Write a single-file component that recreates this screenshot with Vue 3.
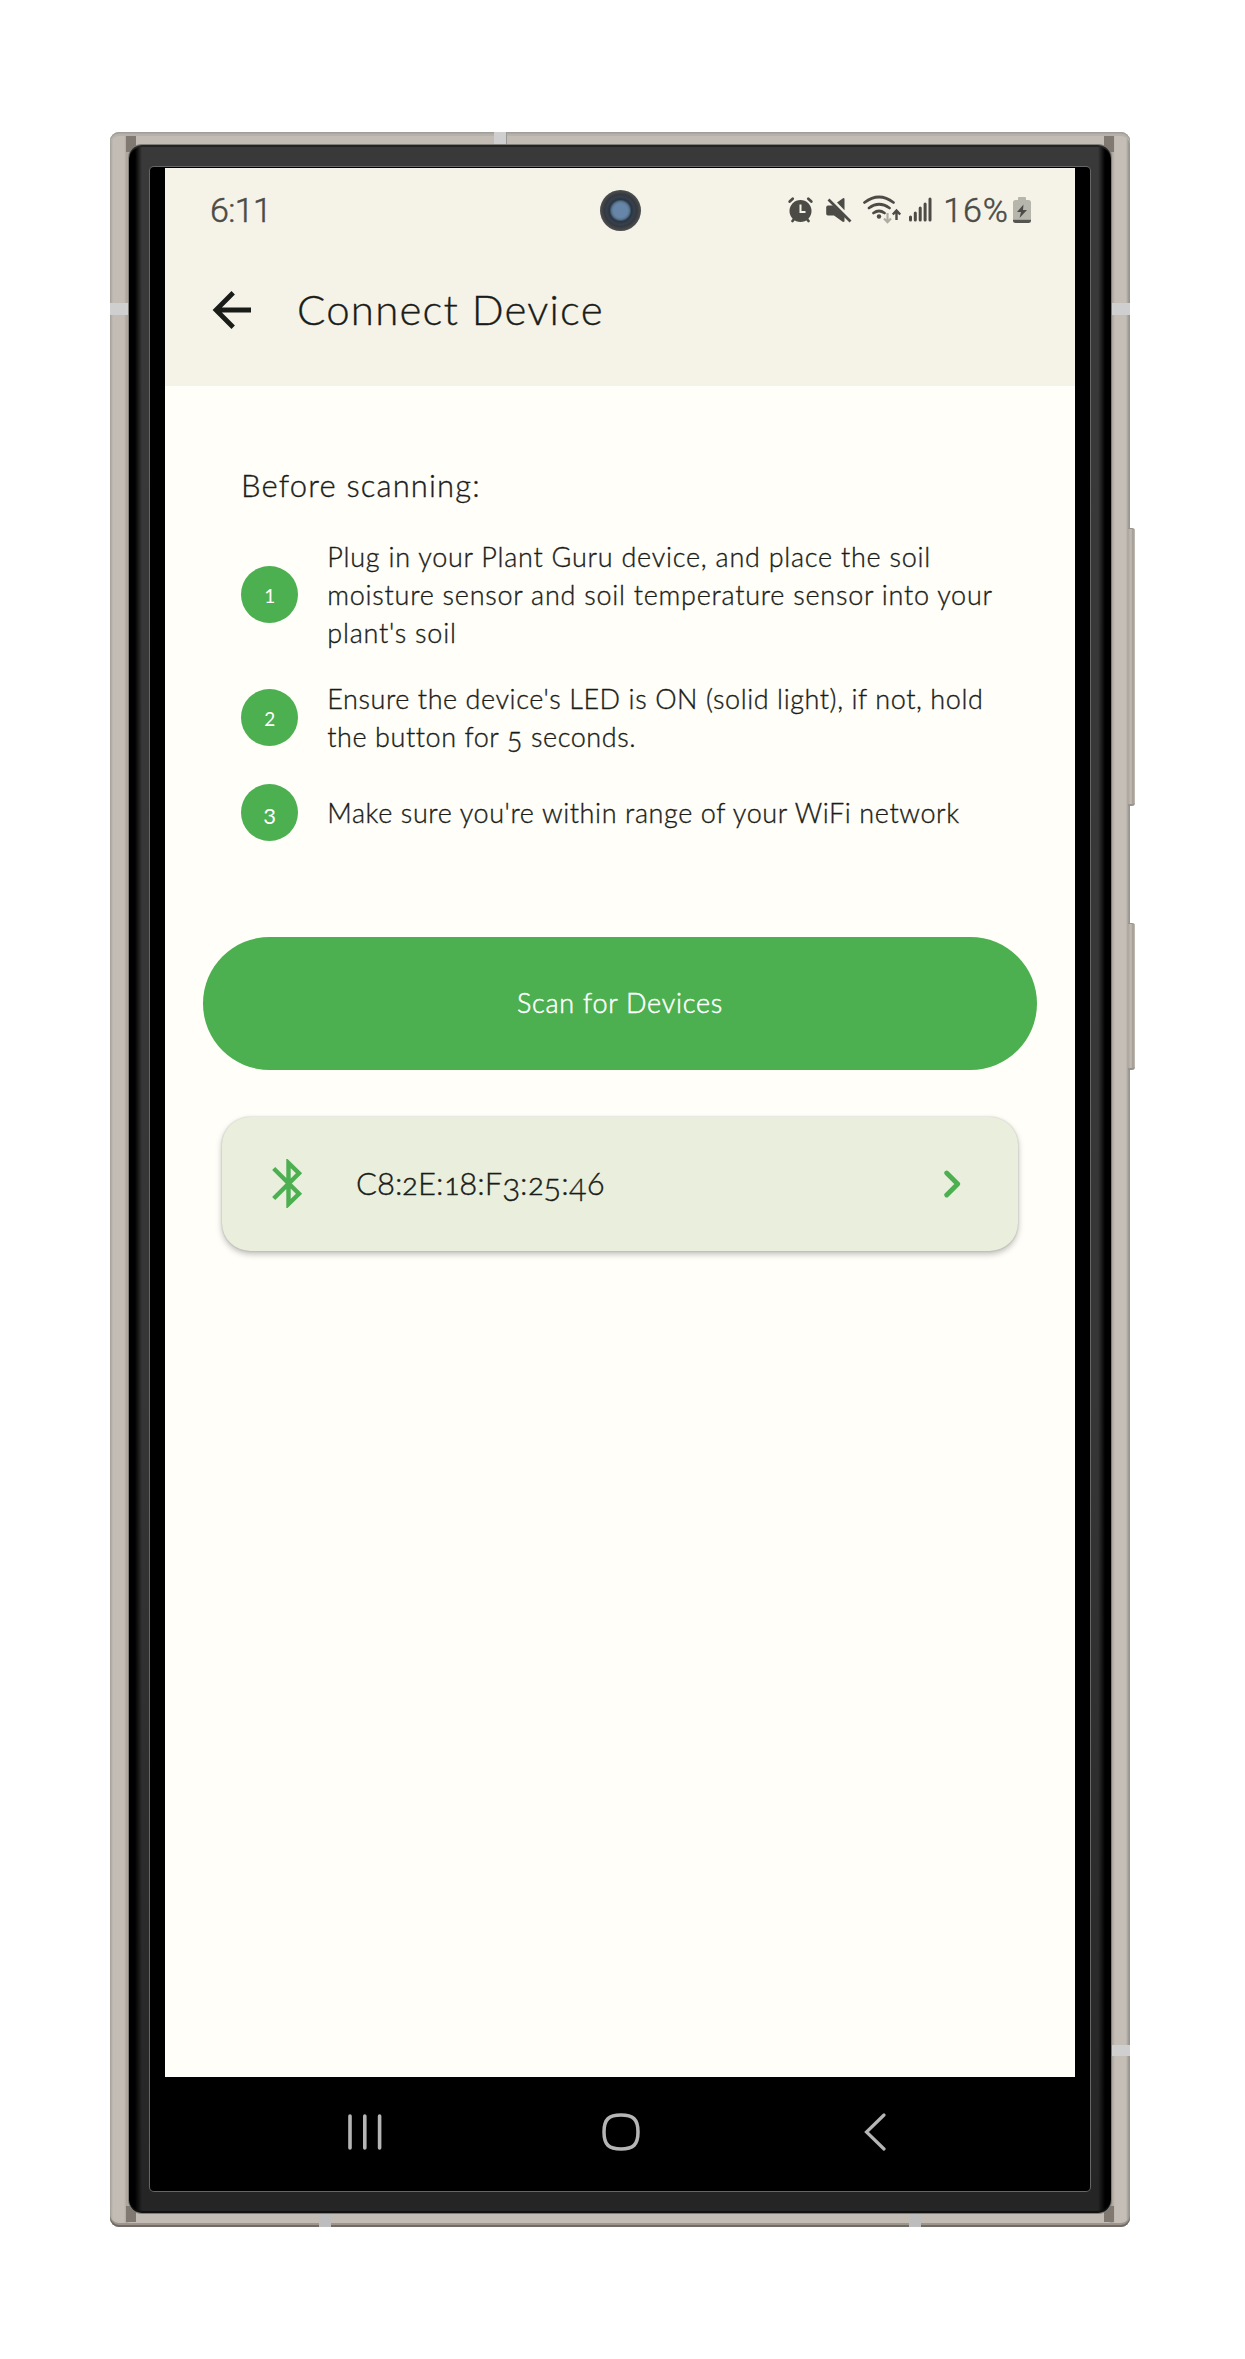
<script setup>
const steps = [
  { n: '1', low: false, lines: [
    { text: 'Plug in your Plant Guru device, and place the soil', c: 'wide' },
    { text: 'moisture sensor and soil temperature sensor into your', c: 'wide' },
    { text: "plant's soil", c: 'wide' }] },
  { n: '2', low: false, lines: [
    { text: "Ensure the device's LED is ON (solid light), if not, hold", c: 'snug' },
    { text: 'the button for 5 seconds.', c: 'snug' }] },
  { n: '3', low: true, lines: [
    { text: "Make sure you're within range of your WiFi network", c: 'medium' }] },
]
const address = 'C8:2E:18:F3:25:46'.split('')

// Old-style figures: 1 and 2 sit at x-height, 3, 4 and 5 descend below the baseline.
const figure = (ch) => ('12'.includes(ch) ? 'small' : '345'.includes(ch) ? 'low' : '')
const pieces = (text) => text.split(/(\d)/)
</script>

<template>
  <div class="page">
    <div class="phone">
      <i class="seam top"></i><i class="seam left"></i><i class="seam right"></i>
      <i class="seam right-low"></i><i class="seam bottom-a"></i><i class="seam bottom-b"></i>
      <i class="key volume"></i><i class="key power"></i>
      <i class="corner tl"></i><i class="corner tr"></i><i class="corner bl"></i><i class="corner br"></i>
      <div class="bezel">
        <div class="glass">
          <div class="screen">
            <header>
              <div class="status">
                <span class="clock">6:11</span>
                <div class="indicators">
                  <svg width="150" height="32" viewBox="0 0 150 32" fill="none" stroke="#4c4b46">
                    <g stroke-width="2.8" stroke-linecap="round">
                      <circle cx="17.500" cy="17" r="11" fill="#4c4b46" stroke="none" />
                      <path d="M6.700 7.500l3-2.700M28.300 7.500l-3-2.700M9.500 27l2-2.500M25.500 27l-2-2.500" />
                      <path d="M17.500 10.500v7.500h5" stroke="#f5f3e7" stroke-width="2" stroke-linecap="butt" />
                    </g>
                    <path d="M45 11.500h5l11.500 11V27.500l-1.500.5-9-6.500h-6q-1.800 0-1.800-1.800v-6.400q0-1.800 1.800-1.800zM54 8.500l6-4.300q1.500-.8 1.500 1v11z" fill="#4c4b46" stroke="none" />
                    <path d="M45.500 5.500l22 22" stroke-width="2.600" />
                    <path d="M81.500 8.500q14.500-11 29 0M86 14q10-7.500 20.500 0M90.500 19q5.500-4 11 0" stroke-width="2.700" stroke-linecap="round" />
                    <circle cx="96" cy="22.500" r="2.200" fill="#4c4b46" stroke="none" />
                    <path d="M104.500 19v9M101 24.500l3.500 3.700 3.500-3.700" stroke="#aeaca3" stroke-width="2.200" />
                    <path d="M113.500 26v-9M109.800 20.500l3.700-4 3.700 4" stroke-width="2.400" />
                    <path d="M127.500 26v-3M132.300 26v-7M137.200 26v-12M142.100 26v-16M147 26v-21" stroke-width="3" stroke-linecap="round" />
                  </svg>
                  <span class="percent">16%</span>
                  <svg width="18" height="27" viewBox="0 0 18 27">
                    <path d="M5 1q0-1 1-1h6q1 0 1 1v2h2.500q2.500 0 2.500 2.500V22H0V5.500Q0 3 2.500 3H5z" fill="#b7b6ac" />
                    <path d="M0 22.500h18v1.500q0 2-2.500 2h-13Q0 26 0 24z" fill="#55544f" />
                    <path d="M10.500 7.500L4 15h4l-1.500 6L14 13h-4z" fill="#4c4b46" />
                  </svg>
                </div>
              </div>
              <div class="bar">
                <svg width="40" height="40" viewBox="0 0 40 40" fill="none" stroke="#1a1c18" stroke-width="4.800"><path d="M21.200 2.800L4 20l17.200 17.200M4 20h35" /></svg>
                <h1>Connect Device</h1>
              </div>
            </header>
            <main>
              <h2>Before scanning:</h2>
              <ol>
                <li v-for="s in steps" :key="s.n">
                  <b :class="{ descending: s.low }">{{ s.n }}</b>
                  <p>
                    <span v-for="l in s.lines" :key="l.text" class="line" :class="l.c"><span v-for="(t, i) in pieces(l.text)" :key="i" :class="{ low: t === '5' }">{{ t }}</span></span>
                  </p>
                </li>
              </ol>
              <button>Scan for Devices</button>
              <section class="device">
                <svg width="31" height="49" viewBox="0 0 31 49" fill="none" stroke="#4caf50" stroke-width="4.400"><path d="M1.700 9.500L27 34.700 16.500 45V4L27 14.200 1.700 39.500" /></svg>
                <strong><span v-for="(ch, i) in address" :key="i" :class="figure(ch)">{{ ch }}</span></strong>
                <svg class="chevron" width="17" height="28" viewBox="0 0 17 28" fill="none" stroke="#4caf50" stroke-width="4.800" stroke-linecap="round" stroke-linejoin="round"><path d="M2.700 3L13.700 14l-11 11" /></svg>
              </section>
            </main>
          </div>
          <nav>
            <svg width="34" height="38" viewBox="0 0 34 38" stroke="#b5b5b5" stroke-width="3.600" stroke-linecap="round"><path d="M2 3v32M16.800 3v32M31.600 3v32" /></svg>
            <svg class="home" width="38" height="38" viewBox="0 0 38 38" fill="none" stroke="#b5b5b5" stroke-width="3.500"><path d="M19 2C31 2 36 6 36 19S31 36 19 36 2 32 2 19 7 2 19 2z" /></svg>
            <svg width="22" height="38" viewBox="0 0 22 38" fill="none" stroke="#b5b5b5" stroke-width="3.200" stroke-linecap="round"><path d="M20 2L2.500 19 20 36" /></svg>
          </nav>
          <i class="camera"></i>
        </div>
      </div>
    </div>
  </div>
</template>

<style>
body { margin: 0; background: #fff; }
</style>

<style scoped>
* { box-sizing: border-box; }
.page { width: 1245px; height: 2359px; padding: 132px 0 0 110px; background: #fff; font-family: Lato, sans-serif; font-weight: 300; color: #1a1c18; overflow: hidden; -webkit-text-stroke: .35px currentColor; }
.phone { position: relative; width: 1019.500px; height: 2095px; padding: 13px 18.500px 14px 19px; border-radius: 9px; background: linear-gradient(90deg, #a39f98 0, #c2bcb5 3px, #c2bcb5 14px, #a9a39b 17px, #c2bcb5 20px, #c2bcb5 999px, #a39c94 1001px, #c4beb7 1005px, #c4beb7 1016px, #99948e 1019px); box-shadow: inset 0 1.500px #a19e99, inset 0 4px #b6b1ab, inset 0 -2px #716b66, inset 0 -4px #9b958e; }
.seam { position: absolute; background: #cfcfd0; }
.top { left: 384px; top: 0; width: 13px; height: 13px; border-right: 1px solid #999; }
.left { left: 0; top: 171px; width: 18px; height: 12px; }
.right { right: 0; top: 171px; width: 18px; height: 12px; }
.right-low { right: 0; top: 1913px; width: 18px; height: 11px; }
.bottom-a { left: 209px; bottom: 0; width: 12px; height: 13px; background: #bdbdbe; }
.bottom-b { left: 799px; bottom: 0; width: 12px; height: 13px; background: #bdbdbe; }
.key { position: absolute; left: 1018px; width: 7px; background: linear-gradient(90deg, #aaa59e, #c2bcb5 3px, #9f9992 5px, #c5c0ba); border-radius: 0 3px 3px 0; border: solid #99938c; border-width: 1px 0 2px; }
.volume { top: 396px; height: 278px; }
.power { top: 791px; height: 147px; }
.corner { position: absolute; width: 10px; height: 16px; background: #7f7972; }
.tl { left: 16px; top: 4px; }
.tr { right: 16px; top: 4px; }
.bl { left: 16px; bottom: 5px; }
.br { right: 16px; bottom: 5px; }
.bezel { position: relative; height: 2068px; padding: 22px 21px; border-radius: 13px; background: linear-gradient(90deg, #000 0, #000 6px, #0000 13px, #0000 969px, #000 976px), linear-gradient(#393939, #363636 60%, #252525); box-shadow: inset 0 2px #242424, inset 0 -2px #111, 0 0 0 1px #817d78; }
.glass { position: relative; height: 2024px; padding: 1px 15px 0 15px; border-radius: 4px; background: #000; box-shadow: 0 0 0 1px #666; }
.screen { height: 1909px; background: #fffef9; display: flex; flex-direction: column; }
header { height: 218px; background: #f5f3e7; color: #4c4b46; }
.status { display: flex; justify-content: space-between; align-items: center; padding: 24px 44px 0 45px; height: 60px; font: 300 34px/34px Roboto, sans-serif; -webkit-text-stroke: .5px currentColor; }
.clock { letter-spacing: -.600px; }
.indicators { display: flex; align-items: center; }
.percent { margin: 0 4px 0 10px; letter-spacing: 1px; }
.bar { display: flex; align-items: center; padding: 57px 0 0 47px; color: #1a1c18; }
h1 { font-weight: 300; font-size: 42px; line-height: 50px; margin: -1px 0 1px 45px; letter-spacing: 1.200px; }
main { padding: 79px 38px 0; }
h2 { margin: 0; padding-left: 38px; font-weight: 300; font-size: 31px; line-height: 40px; letter-spacing: 1.150px; }
ol { list-style: none; margin: 32.500px 0 0; padding: 0 0 0 38px; display: flex; flex-direction: column; gap: 28.300px; }
li { display: flex; align-items: center; gap: 29px; }
b { width: 57.300px; height: 57.300px; flex: none; border-radius: 50%; background: #4caf50; color: #fff; font-size: 19px; font-weight: 400; display: flex; align-items: center; justify-content: center; padding-top: 2px; -webkit-text-stroke: 0; }
.descending { font-size: 22px; padding-top: 5px; }
p { margin: 0; font-size: 27px; line-height: 38px; display: flex; flex-direction: column; align-items: flex-start; }
.line { white-space: nowrap; height: 38px; }
.wide { letter-spacing: .750px; }
.snug { letter-spacing: .570px; }
.medium { letter-spacing: .600px; }
.small { display: inline-block; line-height: 1; font-size: .76em; transform: scaleX(1.12); margin: 0 1px; -webkit-text-stroke-width: .6px; }
.low { display: inline-block; line-height: 1; transform: translateY(.19em); }
button { display: block; width: 834px; height: 133px; margin: 95.600px 0 0; padding: 0; border: 0; border-radius: 67px; background: #4caf50; color: #fff; font: 300 27px/38px Lato, sans-serif; letter-spacing: .750px; -webkit-text-stroke: .5px currentColor; }
.device { display: flex; align-items: center; width: 796px; height: 134px; margin: 47px 0 0 19px; padding: 0 57px 0 50px; border-radius: 28px; background: #e9eedd; box-shadow: 0 3px 6px #0004, 0 0 2px #0003; }
strong { font-weight: 300; font-size: 31px; line-height: 40px; margin: 0 0 1px 53px; letter-spacing: 0; white-space: nowrap; }
.chevron { margin-left: auto; }
nav { height: 114px; display: flex; justify-content: space-between; align-items: center; padding: 0 189px 5px 183px; }
.home { margin-right: 4px; }
.camera { position: absolute; left: 450px; top: 23px; width: 41px; height: 41px; border-radius: 50%; background: radial-gradient(ellipse at 50% 50%, #6685a8 0 7px, #58738f 9px, #2c3540 11px, #34414f 14px, #35383c 16px, #4b4d50 20px); }
</style>
